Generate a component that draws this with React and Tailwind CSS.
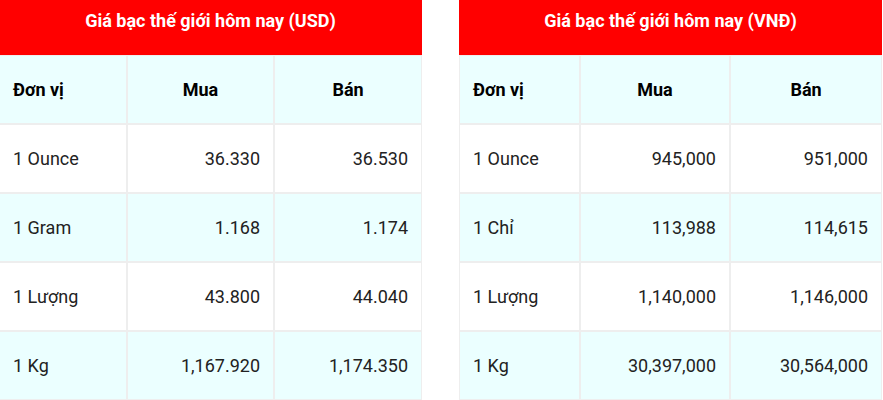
import React from 'react';

const tables = [
  {
    title: 'Giá bạc thế giới hôm nay (USD)',
    cols: 'grid-cols-[128px_147px_148px]',
    extra: '-ml-[1px]',
    rows: [
      ['1 Ounce', '36.330', '36.530'],
      ['1 Gram', '1.168', '1.174'],
      ['1 Lượng', '43.800', '44.040'],
      ['1 Kg', '1,167.920', '1,174.350'],
    ],
  },
  {
    title: 'Giá bạc thế giới hôm nay (VNĐ)',
    cols: 'grid-cols-[121px_150px_152px]',
    extra: '',
    rows: [
      ['1 Ounce', '945,000', '951,000'],
      ['1 Chỉ', '113,988', '114,615'],
      ['1 Lượng', '1,140,000', '1,146,000'],
      ['1 Kg', '30,397,000', '30,564,000'],
    ],
  },
];

function PriceTable({ title, cols, extra, rows }) {
  return (
    <div className={`w-[423px] shrink-0 ${extra}`}>
      <div className="h-[55px] bg-[#ff0000] text-white font-bold text-[18px] leading-6 text-center pt-[9px]">
        {title}
      </div>
      <div className={`grid ${cols} text-[18px]`}>
        <div className="h-[69px] border border-[#eeeeee] bg-[#ebffff] px-[13px] flex items-center font-bold text-black">Đơn vị</div>
        <div className="h-[69px] border border-[#eeeeee] bg-[#ebffff] px-[13px] flex items-center justify-center font-bold text-black">Mua</div>
        <div className="h-[69px] border border-[#eeeeee] bg-[#ebffff] px-[13px] flex items-center justify-center font-bold text-black">Bán</div>
        {rows.map((r, i) => {
          const bg = i % 2 === 0 ? 'bg-white' : 'bg-[#ebffff]';
          return (
            <React.Fragment key={i}>
              <div className={`h-[69px] border border-[#eeeeee] ${bg} px-[13px] flex items-center text-[#222222]`}>{r[0]}</div>
              <div className={`h-[69px] border border-[#eeeeee] ${bg} px-[13px] flex items-center justify-end text-[#222222]`}>{r[1]}</div>
              <div className={`h-[69px] border border-[#eeeeee] ${bg} px-[13px] flex items-center justify-end text-[#222222]`}>{r[2]}</div>
            </React.Fragment>
          );
        })}
      </div>
    </div>
  );
}

export default function App() {
  return (
    <div className="w-[883px] h-[400px] overflow-hidden bg-white font-['Roboto',sans-serif] flex gap-[37px]">
      {tables.map((t) => (
        <PriceTable key={t.title} {...t} />
      ))}
    </div>
  );
}
